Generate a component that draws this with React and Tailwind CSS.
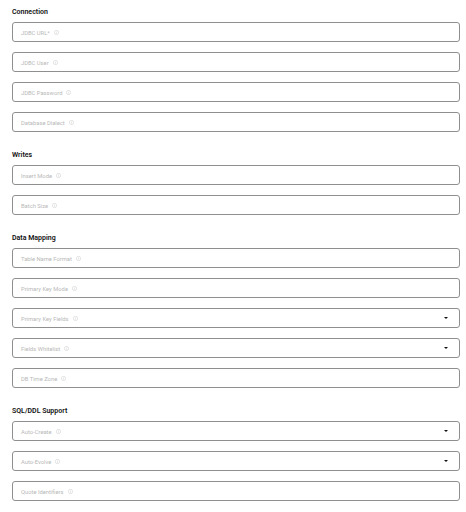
import React from 'react';

const sections = [
  {
    title: 'Connection',
    fields: [
      { label: 'JDBC URL*' },
      { label: 'JDBC User' },
      { label: 'JDBC Password' },
      { label: 'Database Dialect' },
    ],
  },
  {
    title: 'Writes',
    fields: [{ label: 'Insert Mode' }, { label: 'Batch Size' }],
  },
  {
    title: 'Data Mapping',
    fields: [
      { label: 'Table Name Format' },
      { label: 'Primary Key Mode' },
      { label: 'Primary Key Fields', select: true },
      { label: 'Fields Whitelist', select: true },
      { label: 'DB Time Zone' },
    ],
  },
  {
    title: 'SQL/DDL Support',
    fields: [
      { label: 'Auto-Create', select: true },
      { label: 'Auto-Evolve', select: true },
      { label: 'Quote Identifiers' },
    ],
  },
];

const InfoIcon = () => (
  <svg width="5" height="5" viewBox="0 0 10 10" className="ml-[4px] shrink-0">
    <circle cx="5" cy="5" r="4.3" fill="none" stroke="#c8c8c8" strokeWidth="1" />
    <line x1="5" y1="4.3" x2="5" y2="7.3" stroke="#c8c8c8" strokeWidth="1" />
    <circle cx="5" cy="2.9" r="0.6" fill="#c8c8c8" />
  </svg>
);

const Field = ({ label, select }) => (
  <div className="h-[20px] flex items-center rounded-[3px] border border-[#8f8f8f] pl-[8px] pr-[11px]">
    <span className="text-[5.8px] leading-[8px] pt-[1px] text-[#b8b8b8]">{label}</span>
    <InfoIcon />
    {select && (
      <svg width="4" height="2" viewBox="0 0 4 2" className="ml-auto">
        <path d="M0 0 L4 0 L2 2 Z" fill="#111" />
      </svg>
    )}
  </div>
);

export default function App() {
  return (
    <div className="w-[466px] h-[512px] bg-white pl-[12px] pr-[6px] pt-[7px]" style={{ fontFamily: 'Roboto, "Liberation Sans", sans-serif' }}>
      <div className="flex flex-col gap-[18px]">
        {sections.map((s) => (
          <div key={s.title}>
            <div className="h-[10px] leading-[10px] mb-[5px] text-[7px] font-semibold text-[#111]">{s.title}</div>
            <div className="flex flex-col gap-[10px]">
              {s.fields.map((f) => (
                <Field key={f.label} {...f} />
              ))}
            </div>
          </div>
        ))}
      </div>
    </div>
  );
}
